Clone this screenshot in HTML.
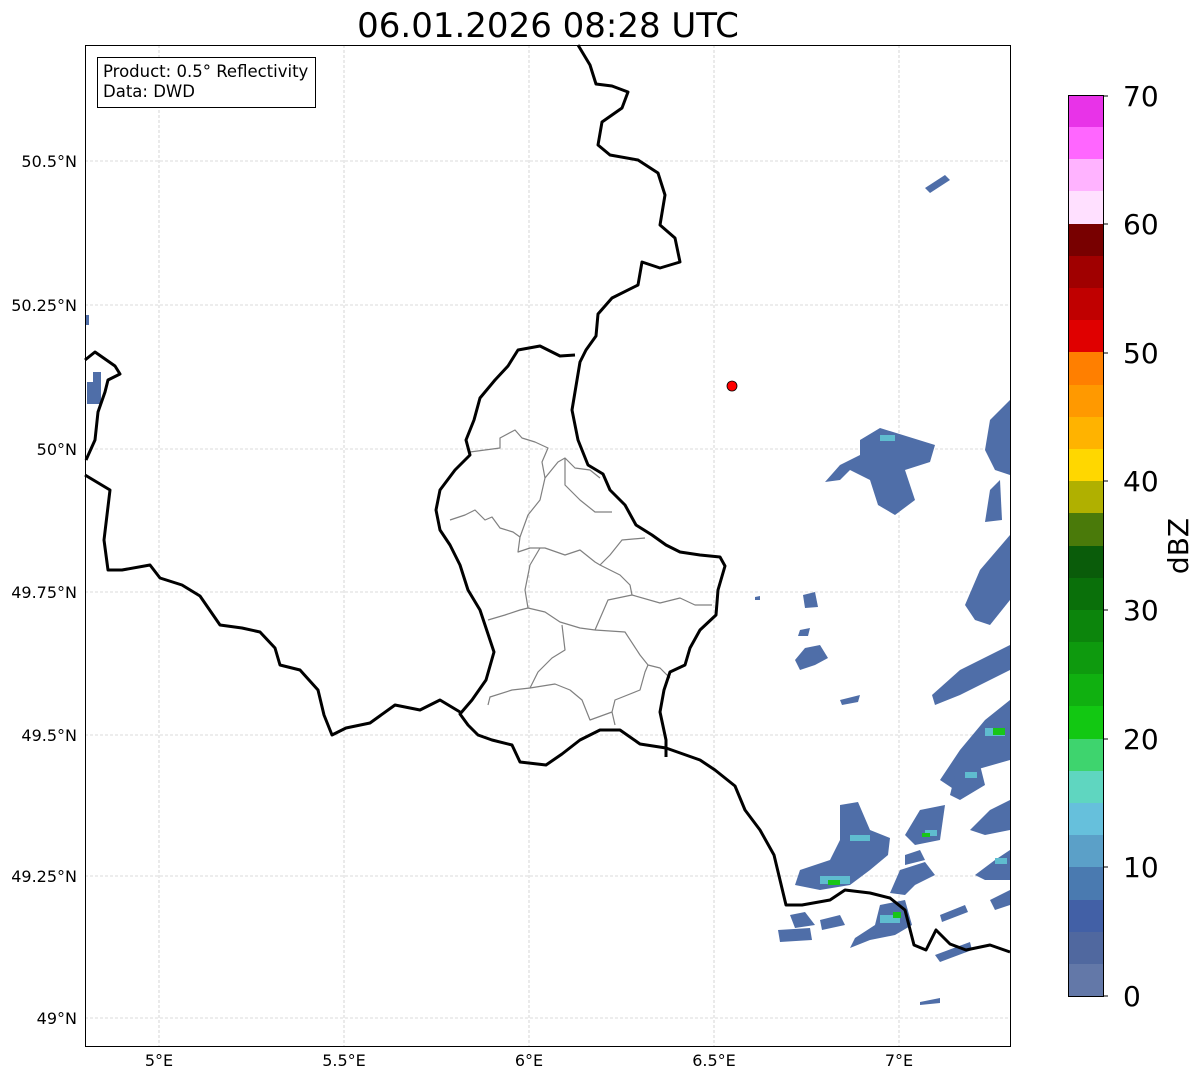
<!DOCTYPE html>
<html><head><meta charset="utf-8"><style>
html,body{margin:0;padding:0;background:#fff;}
svg{display:block;font-family:"DejaVu Sans","Liberation Sans",sans-serif;}
</style></head><body>
<svg width="1202" height="1081" viewBox="0 0 1202 1081" xmlns="http://www.w3.org/2000/svg">
<rect width="1202" height="1081" fill="#fff"/>
<text x="548" y="37" font-size="34" text-anchor="middle" fill="#000">06.01.2026 08:28 UTC</text>
<g stroke="#b8b8b8" stroke-width="0.6" stroke-dasharray="3,2">
<line x1="85" x2="1010" y1="161" y2="161"/><line x1="85" x2="1010" y1="305" y2="305"/>
<line x1="85" x2="1010" y1="449" y2="449"/><line x1="85" x2="1010" y1="592" y2="592"/>
<line x1="85" x2="1010" y1="735" y2="735"/><line x1="85" x2="1010" y1="876" y2="876"/>
<line x1="85" x2="1010" y1="1018" y2="1018"/>
<line y1="45" y2="1046" x1="159" x2="159"/><line y1="45" y2="1046" x1="344" x2="344"/>
<line y1="45" y2="1046" x1="529" x2="529"/><line y1="45" y2="1046" x1="714" x2="714"/>
<line y1="45" y2="1046" x1="899" x2="899"/>
</g>
<g fill="#4f6ea8">
<rect x="86" y="315" width="3" height="10"/>
<rect x="87" y="382" width="14" height="22"/><rect x="93" y="372" width="8" height="12"/>
<path d="M925 188 L945 175 L950 180 L930 193Z"/>
<path d="M860 440 L880 428 L935 445 L930 462 L905 470 L915 500 L895 515 L878 505 L870 480 L850 470 L840 480 L825 482 L840 465 L860 455Z"/>
<path d="M990 420 L1010 400 L1010 475 L995 470 L985 450Z"/>
<path d="M990 490 L1000 480 L1002 520 L985 522Z"/>
<path d="M803 595 L815 592 L818 607 L805 608Z"/>
<path d="M800 630 L810 628 L808 636 L798 636Z"/>
<path d="M805 648 L820 645 L828 658 L815 665 L800 670 L795 660Z"/>
<path d="M1010 535 L1010 600 L990 625 L975 620 L965 605 L980 570Z"/>
<path d="M1010 645 L1010 670 L960 695 L935 705 L932 695 L960 670 L990 655Z"/>
<path d="M1010 700 L1010 760 L975 770 L955 790 L940 780 L960 750 L985 720Z"/>
<path d="M1010 800 L1010 830 L985 835 L970 830 L990 810Z"/>
<path d="M955 775 L980 765 L985 785 L960 800 L950 795Z"/>
<path d="M920 810 L945 805 L940 840 L915 845 L905 835Z"/>
<path d="M1010 850 L1010 880 L985 880 L975 875 L995 860Z"/>
<path d="M840 805 L858 802 L870 830 L890 838 L888 855 L870 870 L850 885 L820 890 L795 885 L800 870 L830 860 L840 840Z"/>
<path d="M900 870 L925 862 L935 875 L915 885 L905 895 L890 893Z"/>
<path d="M880 905 L905 900 L912 925 L895 935 L870 940 L850 948 L855 938 L875 925Z"/>
<path d="M778 930 L810 928 L812 940 L780 942Z"/>
<path d="M790 915 L805 912 L815 925 L795 928Z"/>
<path d="M820 920 L840 915 L845 925 L822 930Z"/>
<path d="M905 855 L920 850 L925 860 L905 865Z"/>
<path d="M940 915 L965 905 L968 912 L942 922Z"/>
<path d="M935 955 L970 942 L972 950 L940 962Z"/>
<path d="M990 900 L1010 890 L1010 905 L995 910Z"/>
<path d="M920 1002 L940 998 L940 1003 L920 1005Z"/>
<path d="M840 700 L860 695 L858 702 L842 705Z"/>
<path d="M755 597 L760 596 L760 600 L755 600Z"/>
</g>
<g fill="#5fbccf">
<rect x="880" y="435" width="15" height="6"/><rect x="985" y="728" width="20" height="8"/>
<rect x="965" y="772" width="12" height="6"/><rect x="820" y="876" width="30" height="8"/>
<rect x="850" y="835" width="20" height="6"/><rect x="880" y="915" width="20" height="8"/>
<rect x="925" y="830" width="12" height="6"/><rect x="995" y="858" width="12" height="6"/>
</g>
<g fill="#18c618">
<rect x="993" y="728" width="12" height="7"/><rect x="828" y="880" width="12" height="5"/>
<rect x="893" y="912" width="8" height="6"/><rect x="922" y="833" width="8" height="4"/>
</g>
<g fill="none" stroke="#808080" stroke-width="1.2" stroke-linejoin="round">
<path d="M470 452 L485 450 L500 448 L500 438 L515 430 L522 438 L535 442 L548 448 L542 462 L545 478"/>
<path d="M545 478 L558 462 L565 458 L575 468 L590 470 L600 478"/>
<path d="M565 458 L565 485 L580 500 L595 512 L612 512"/>
<path d="M450 520 L465 515 L475 510 L485 520 L492 517 L500 528 L513 532 L520 537"/>
<path d="M545 478 L540 500 L528 515 L520 537 L518 552 L530 548 L545 548 L565 555 L580 550 L595 562 L600 565 L610 555 L622 540 L645 538"/>
<path d="M540 548 L530 565 L525 590 L528 608 L545 612 L560 622 L580 628 L595 630"/>
<path d="M600 565 L620 575 L630 585 L632 595"/>
<path d="M595 630 L608 600 L632 595 L660 603 L680 598 L695 605 L712 605"/>
<path d="M488 620 L505 615 L520 610 L528 608"/>
<path d="M562 625 L565 650 L552 658 L538 672 L530 688 L512 690 L490 697 L488 705"/>
<path d="M530 688 L555 684 L570 690 L582 700 L590 720 L612 712 L615 700 L640 690 L645 672 L648 665"/>
<path d="M595 630 L625 632 L640 655 L648 665 L660 668 L670 678"/>
<path d="M612 712 L615 725"/>
</g>
<g fill="none" stroke="#000" stroke-width="3" stroke-linejoin="round">
<path d="M578 45 L590 65 L596 84 L612 86 L628 92 L622 108 L602 122 L598 145 L610 155 L638 160 L658 173 L665 195 L660 225 L675 238 L680 262 L660 268 L642 262 L638 285 L612 298 L598 314 L596 336 L586 350 L580 362 L577 380 L572 410 L578 440 L588 465 L603 474 L610 490 L625 505 L636 525 L652 535 L666 545 L680 552 L700 555 L720 557 L725 566 L718 590 L716 615 L700 630 L690 648 L685 665 L670 672 L664 690 L660 712 L666 740 L666 757"/>
<path d="M575 355 L560 356 L540 346 L518 350 L508 366 L495 380 L480 398 L474 420 L466 440 L470 455 L455 470 L440 490 L436 510 L440 530 L450 545 L460 565 L468 590 L480 610 L485 625 L494 652 L486 680 L472 700 L460 714 L468 725 L478 735 L492 740 L512 745 L520 762 L546 765 L562 754 L580 740 L600 730 L620 730 L640 744 L666 748"/>
<path d="M85 475 L110 490 L104 540 L108 570 L122 570 L150 565 L160 578 L182 585 L200 596 L220 625 L242 628 L260 632 L275 648 L280 665 L300 670 L318 690 L324 715 L332 735 L346 728 L370 723 L395 705 L420 710 L440 700 L460 712"/>
<path d="M85 360 L95 352 L115 366 L120 374 L108 380 L105 392 L98 412 L95 440 L86 460"/>
<path d="M666 748 L700 760 L715 770 L735 786 L745 810 L760 830 L774 855 L780 880 L786 905 L802 905 L830 900 L845 890 L870 893 L890 898 L905 910 L914 945 L926 950 L936 930 L950 944 L966 950 L990 945 L1010 952"/>
</g>
<circle cx="732" cy="386" r="5" fill="#f00" stroke="#000" stroke-width="0.8"/>
<rect x="85.5" y="45.5" width="925" height="1001" fill="none" stroke="#000" stroke-width="1"/>
<rect x="97.5" y="57.5" width="218" height="50" fill="#fff" stroke="#000" stroke-width="1"/>
<text x="103" y="77" font-size="16.5">Product: 0.5° Reflectivity</text>
<text x="103" y="97" font-size="16.5">Data: DWD</text>
<g font-size="16" text-anchor="end">
<text x="77" y="167">50.5°N</text><text x="77" y="311">50.25°N</text>
<text x="77" y="455">50°N</text><text x="77" y="598">49.75°N</text>
<text x="77" y="741">49.5°N</text><text x="77" y="882">49.25°N</text>
<text x="77" y="1024">49°N</text>
</g>
<g font-size="16" text-anchor="middle">
<text x="159" y="1066">5°E</text><text x="344" y="1066">5.5°E</text>
<text x="529" y="1066">6°E</text><text x="714" y="1066">6.5°E</text>
<text x="899" y="1066">7°E</text>
</g>
<g>
<rect x="1068" y="95" width="35" height="33" fill="#e833e8"/>
<rect x="1068" y="127" width="35" height="33" fill="#ff66ff"/>
<rect x="1068" y="159" width="35" height="33" fill="#ffb3ff"/>
<rect x="1068" y="191" width="35" height="33" fill="#ffe0ff"/>
<rect x="1068" y="224" width="35" height="33" fill="#780000"/>
<rect x="1068" y="256" width="35" height="33" fill="#a00000"/>
<rect x="1068" y="288" width="35" height="33" fill="#c00000"/>
<rect x="1068" y="320" width="35" height="33" fill="#e00000"/>
<rect x="1068" y="352" width="35" height="33" fill="#ff7f00"/>
<rect x="1068" y="385" width="35" height="33" fill="#ff9900"/>
<rect x="1068" y="417" width="35" height="33" fill="#ffb300"/>
<rect x="1068" y="449" width="35" height="33" fill="#ffd700"/>
<rect x="1068" y="481" width="35" height="33" fill="#b0b000"/>
<rect x="1068" y="513" width="35" height="33" fill="#4a7a0a"/>
<rect x="1068" y="546" width="35" height="33" fill="#0a5c0a"/>
<rect x="1068" y="578" width="35" height="33" fill="#0a700a"/>
<rect x="1068" y="610" width="35" height="33" fill="#0c850c"/>
<rect x="1068" y="642" width="35" height="33" fill="#0e9a0e"/>
<rect x="1068" y="674" width="35" height="33" fill="#10b010"/>
<rect x="1068" y="706" width="35" height="33" fill="#12c812"/>
<rect x="1068" y="739" width="35" height="33" fill="#3ed46e"/>
<rect x="1068" y="771" width="35" height="33" fill="#5fd6c0"/>
<rect x="1068" y="803" width="35" height="33" fill="#66c0dc"/>
<rect x="1068" y="835" width="35" height="33" fill="#5ba0c8"/>
<rect x="1068" y="867" width="35" height="33" fill="#4a7ab0"/>
<rect x="1068" y="900" width="35" height="33" fill="#4260a6"/>
<rect x="1068" y="932" width="35" height="33" fill="#50689f"/>
<rect x="1068" y="964" width="35" height="32" fill="#6378a8"/>
<rect x="1068.5" y="95.5" width="35" height="901" fill="none" stroke="#000" stroke-width="1"/>
<g stroke="#000" stroke-width="1">
<line x1="1103" x2="1108" y1="96" y2="96"/><line x1="1103" x2="1108" y1="224" y2="224"/>
<line x1="1103" x2="1108" y1="353" y2="353"/><line x1="1103" x2="1108" y1="481" y2="481"/>
<line x1="1103" x2="1108" y1="610" y2="610"/><line x1="1103" x2="1108" y1="739" y2="739"/>
<line x1="1103" x2="1108" y1="867" y2="867"/><line x1="1103" x2="1108" y1="996" y2="996"/>
</g>
<g font-size="28">
<text x="1123" y="106">70</text><text x="1123" y="234">60</text>
<text x="1123" y="363">50</text><text x="1123" y="491">40</text>
<text x="1123" y="620">30</text><text x="1123" y="749">20</text>
<text x="1123" y="877">10</text><text x="1123" y="1006">0</text>
</g>
<text x="0" y="0" font-size="28" text-anchor="middle" transform="translate(1188,546) rotate(-90)">dBZ</text>
</g>
</svg>
</body></html>
